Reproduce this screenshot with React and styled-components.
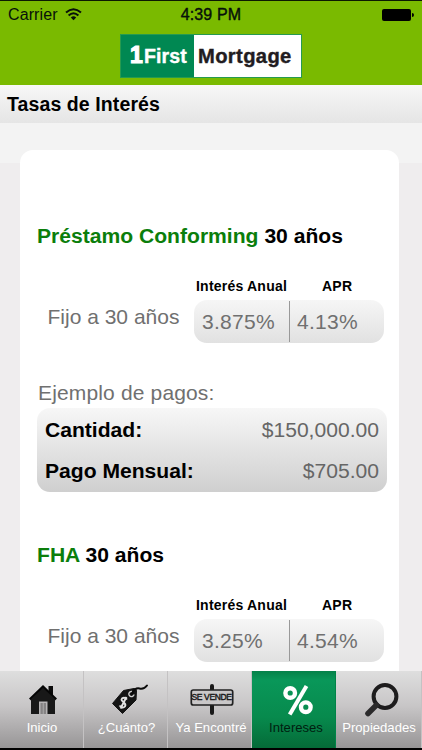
import React from 'react'
import styled, { createGlobalStyle } from 'styled-components'

const loans = [
    {
        name: 'Préstamo Conforming',
        interest: '3.875%',
        apr: '4.13%',
        payments: [['Cantidad:', '$150,000.00'], ['Pago Mensual:', '$705.00']],
    },
    { name: 'FHA', interest: '3.25%', apr: '4.54%' },
]

function HomeIcon() {
    return (
        <svg width="30" height="32" viewBox="0 0 30 32">
            <path d="M20.5 2h4.500v9h-4.500z" fill="#0b0b0b" />
            <path d="M15 1 29 14.500 27 16.500 15 5 3 16.500 1 14.500z" fill="#050505" />
            <path d="M15 4 27 15V30H3V15z" fill="#181818" />
            <path d="M11 17.500h8.500V30H11z" fill="#b7b5b6" />
            <path d="M12.500 19h5.500v11h-5.500z" fill="#858384" />
            <path d="M15.250 19v11" stroke="#bbb" strokeWidth=".7" />
        </svg>
    )
}

function TagIcon() {
    return (
        <svg width="38" height="32" viewBox="0 0 38 32">
            <path d="M1.500 19.500 12.500 6.500 23 4.500Q25.500 4.500 25.500 7L25 16 11.500 29.500z" fill="#141414" stroke="#141414" strokeLinejoin="round" />
            <path d="M23 10.500A2.600 2.600 0 1 1 21 7.500" fill="none" stroke="#d0d0d0" strokeWidth="1.400" />
            <path d="M21 9.500Q24 3.500 28.500 4.500T36 1.500" fill="none" stroke="#0a0a0a" strokeWidth="2" strokeLinecap="round" />
            <path d="M16 15.500Q13.500 12.500 11 14.500C8.500 17.500 16.500 18.500 14 22.300Q11.500 25 8.500 21.500M15.500 13 9.500 24.500" fill="none" stroke="#e2e2e2" strokeWidth="1.900" />
        </svg>
    )
}

function SignIcon() {
    return (
        <Sign>
            <svg width="44" height="33" viewBox="0 0 44 33">
                <path d="M22 3V30" stroke="#191919" strokeWidth="4" strokeLinecap="round" />
                <rect x="1.300" y="7" width="41.400" height="15" rx="2" fill="#c9c7c8" stroke="#222" strokeWidth="1.700" />
            </svg>
            <SignText>SE VENDE</SignText>
        </Sign>
    )
}

function PercentIcon() {
    return (
        <svg width="34" height="32" viewBox="0 0 34 32">
            <g fill="none" stroke="#fff">
                <circle cx="9.200" cy="9" r="4.800" strokeWidth="4.400" />
                <circle cx="24.800" cy="23.200" r="4.800" strokeWidth="4.400" />
                <path d="M25.500 2 8.700 30.500" strokeWidth="4" />
            </g>
        </svg>
    )
}

function SearchIcon() {
    return (
        <svg width="36" height="35" viewBox="0 0 36 35">
            <circle cx="22" cy="14.500" r="11.400" fill="none" stroke="#1d1c1d" strokeWidth="4" />
            <path d="M13.500 23 5 31.500" stroke="#2b2a2b" strokeWidth="5.500" strokeLinecap="round" />
        </svg>
    )
}

const tabs = [
    { label: 'Inicio', icon: HomeIcon, shift: 1, iconShift: 2 },
    { label: '¿Cuánto?', icon: TagIcon, shift: 2, iconShift: 6 },
    { label: 'Ya Encontré', icon: SignIcon, shift: 3, iconShift: 1 },
    { label: 'Intereses', icon: PercentIcon, shift: 5, iconShift: 3, active: true },
    { label: 'Propiedades', icon: SearchIcon, shift: 1, iconShift: 3 },
]

function App() {
    return (
        <Screen>
            <GlobalStyle />
            <Header>
                <StatusBar>
                    <Carrier>
                        Carrier
                        <svg width="17" height="13" viewBox="0 0 17 13">
                            <g fill="none" stroke="#07100a" strokeWidth="2">
                                <path d="M1 4.600Q8.500-2 16 4.600" />
                                <path d="M3.600 7.500Q8.500 3 13.400 7.500" />
                            </g>
                            <path d="M5.800 9.500Q8.500 7 11.200 9.500L8.500 12.200z" fill="#07100a" />
                        </svg>
                    </Carrier>
                    <Time>4:39 PM</Time>
                    <Battery />
                </StatusBar>
                <Logo>
                    <LogoFirst><b>1</b>First</LogoFirst>
                    <LogoMortgage>Mortgage</LogoMortgage>
                </Logo>
            </Header>
            <TitleBar>Tasas de Interés</TitleBar>
            <Content>
                <Card>
                    {loans.map(loan => (
                        <Loan key={loan.name}>
                            <LoanTitle><span>{loan.name}</span> 30 años</LoanTitle>
                            <ColumnNames>
                                <span>Interés Anual</span>
                                <span>APR</span>
                            </ColumnNames>
                            <RateRow>
                                <RateLabel>Fijo a 30 años</RateLabel>
                                <Rates>
                                    <Rate>{loan.interest}</Rate>
                                    <Rate $divided>{loan.apr}</Rate>
                                </Rates>
                            </RateRow>
                            {loan.payments && (
                                <>
                                    <ExampleLabel>Ejemplo de pagos:</ExampleLabel>
                                    <Payments>
                                        {loan.payments.map(([label, amount]) => (
                                            <Payment key={label}><b>{label}</b><span>{amount}</span></Payment>
                                        ))}
                                    </Payments>
                                </>
                            )}
                        </Loan>
                    ))}
                </Card>
            </Content>
            <TabBar>
                {tabs.map(({ label, icon: Icon, shift, iconShift, active }) => (
                    <Tab key={label} $active={active} $shift={shift}>
                        <IconBox $shift={iconShift}><Icon /></IconBox>
                        <span>{label}</span>
                    </Tab>
                ))}
            </TabBar>
        </Screen>
    )
}

export default App

const GlobalStyle = createGlobalStyle`
    body {
        margin: 0;
    }

    * {
        box-sizing: border-box;
    }
`

const Screen = styled.div`
    display: flex;
    flex-direction: column;
    width: 422px;
    height: 750px;
    overflow: hidden;
    background: #efedee;
    font-family: 'Liberation Sans', Arial, sans-serif;
    color: #000;
    white-space: nowrap;
`

const Header = styled.header`
    flex: none;
    height: 85px;
    border-top: 1px solid #0c1a00;
    background: #7aba00;
    display: flex;
    flex-direction: column;
    align-items: center;
`

const StatusBar = styled.div`
    width: 100%;
    height: 28px;
    margin-bottom: 5px;
    padding: 0 8px;
    display: grid;
    grid-template-columns: 1fr auto 1fr;
    align-items: center;
    color: #07100a;
`

const Carrier = styled.div`
    display: flex;
    align-items: center;
    gap: 7px;
    font-size: 16px;
    letter-spacing: 0.1px;

    svg {
        margin-bottom: 2px;
    }
`

const Time = styled.div`
    font-size: 16px;
    -webkit-text-stroke: 0.4px #07100a;
    letter-spacing: 0.15px;
`

const Battery = styled.div`
    justify-self: end;
    margin-right: 3px;
    width: 29px;
    height: 12px;
    border-radius: 2px;
    background: #000;
    position: relative;

    &::after {
        content: '';
        position: absolute;
        right: -3px;
        top: 4px;
        width: 2px;
        height: 4px;
        border-radius: 0 2px 2px 0;
        background: #000;
    }
`

const Logo = styled.div`
    display: flex;
    width: 182px;
    height: 44px;
    border: 1px solid #269a50;
    background: #fff;
    font-weight: bold;
    font-size: 19.5px;
    line-height: 43px;
`

const LogoFirst = styled.div`
    display: flex;
    align-items: baseline;
    width: 73px;
    padding-left: 9px;
    background: #008852;
    color: #fff;
    letter-spacing: 0.1px;
    -webkit-text-stroke: 0.4px #fff;

    b {
        width: 14px;
        font-size: 23px;
        line-height: 40px;
        -webkit-text-stroke: 1.2px #fff;
    }
`

const LogoMortgage = styled.div`
    padding-left: 4px;
    color: #221c1f;
    font-size: 20.2px;
    letter-spacing: 0.35px;
    -webkit-text-stroke: 0.4px #221c1f;
`

const TitleBar = styled.h1`
    flex: none;
    height: 38px;
    margin: 0;
    padding-left: 7px;
    background: linear-gradient(#f7f7f7, #e5e5e5);
    font-size: 19.5px;
    line-height: 38px;
    letter-spacing: 0.1px;
`

const Content = styled.main`
    flex: 1;
    min-height: 0;
    padding: 27px 23px 0 20px;
    background: linear-gradient(#f3f3f3 40px, #efedee 40px);
`

const Card = styled.div`
    height: 521px;
    padding: 69px 12px 0 17px;
    border-radius: 13px 13px 0 0;
    background: #fff;
    overflow: hidden;
`

const Loan = styled.section`
    height: 319px;
`

const LoanTitle = styled.h2`
    height: 34px;
    margin: 0;
    font-size: 21.1px;
    line-height: 34px;

    span {
        color: #0b7e0b;
    }
`

const ColumnNames = styled.div`
    display: flex;
    gap: 35px;
    height: 47px;
    padding: 24px 0 0 159px;
    font-size: 14px;
    font-weight: bold;
    line-height: 18px;
    letter-spacing: 0.22px;
`

const RateRow = styled.div`
    display: flex;
    height: 43px;
`

const RateLabel = styled.div`
    width: 157px;
    padding-left: 10.5px;
    font-size: 21px;
    line-height: 33px;
    color: #707070;
`

const Rates = styled.div`
    display: flex;
    width: 190px;
    padding: 1px 0;
    border-radius: 13px;
    background: linear-gradient(#f6f6f6, #e1e1e1);
`

const Rate = styled.div`
    width: 95px;
    padding-left: ${props => props.$divided ? 7 : 8}px;
    border-left: ${props => props.$divided ? '1px solid #999' : 'none'};
    font-size: 21px;
    line-height: 42px;
    letter-spacing: 0.3px;
    color: #707070;
`

const ExampleLabel = styled.div`
    height: 65px;
    padding: 37px 0 0 1px;
    font-size: 21px;
    line-height: 26px;
    letter-spacing: 0.15px;
    color: #707070;
`

const Payments = styled.div`
    width: 350px;
    height: 84px;
    padding: 1px 8px;
    border-radius: 13px;
    background: linear-gradient(#f7f7f7, #cfcfcf);
`

const Payment = styled.div`
    display: flex;
    justify-content: space-between;
    font-size: 21.1px;
    line-height: 41px;

    span {
        color: #666;
    }
`

const TabBar = styled.nav`
    flex: none;
    display: grid;
    grid-template-columns: 84px 84px 84px 84px 86px;
    height: 79px;
    border-bottom: 2px solid #000;
`

const Tab = styled.div`
    display: flex;
    flex-direction: column;
    align-items: center;
    padding-left: ${props => props.$shift}px;
    border-right: 1px solid ${props => props.$active ? '#008348' : '#c4c2c3'};
    background: ${props => props.$active ? 'linear-gradient(#058149, #099759 12%, #078a4d 60%, #056b38)' : 'linear-gradient(#dedede, #c8c6c7 45%, #979596)'};
    color: ${props => props.$active ? '#002010' : '#fff'};
    font-size: 13.1px;
    line-height: 18px;
`

const IconBox = styled.div`
    display: flex;
    align-items: center;
    justify-content: center;
    height: 48px;
    padding: 9px 0 0 ${props => props.$shift}px;
`

const Sign = styled.div`
    position: relative;
    width: 44px;
    height: 33px;
`

const SignText = styled.div`
    position: absolute;
    top: 7px;
    left: 0;
    width: 44px;
    font-size: 8.5px;
    line-height: 15px;
    text-align: center;
    letter-spacing: -0.35px;
    color: #181818;
    -webkit-text-stroke: 0.4px #181818;
`
